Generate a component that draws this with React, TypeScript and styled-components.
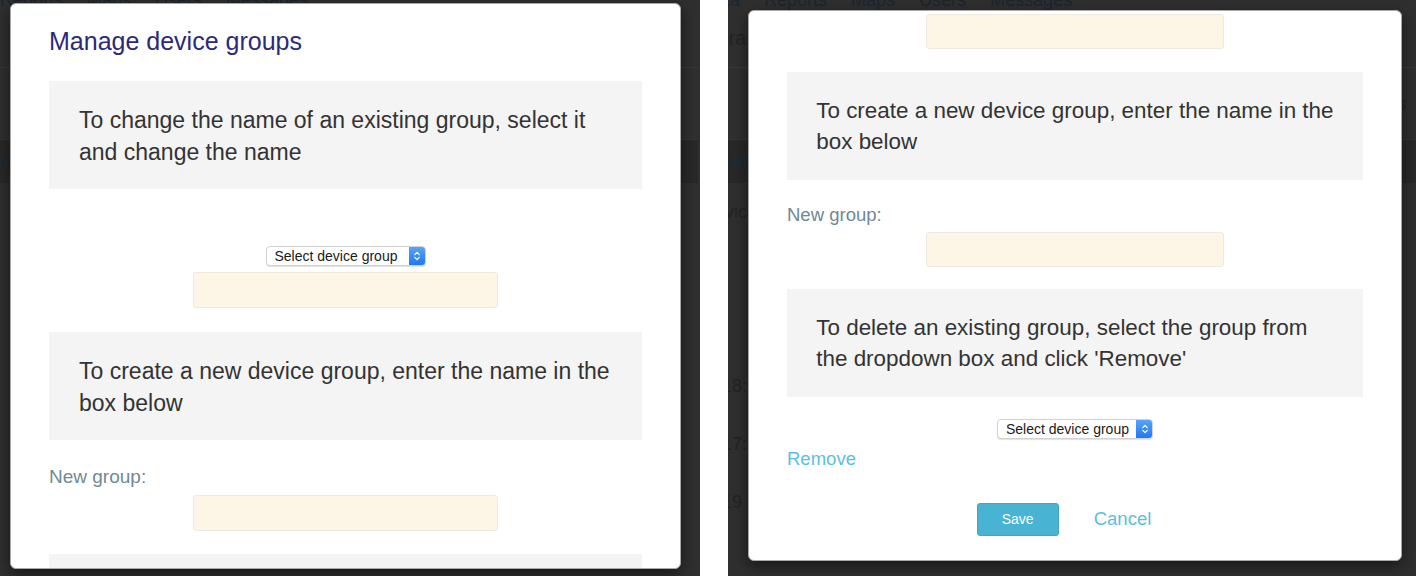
import React from 'react'
import styled, { createGlobalStyle, ThemeProvider } from 'styled-components'

type Scale = { s: number; boxBottom: number }
const px = (n: number) => (p: { theme: Scale }) => `${(p.theme.s * n).toFixed(2)}px`

const GlobalStyle = createGlobalStyle`
  html, body {
    margin: 0;
    padding: 0;
    background: #ffffff;
  }
  body {
    font-family: 'Liberation Sans', Arial, Helvetica, sans-serif;
  }
  * {
    box-sizing: border-box;
  }
`

// page holding the two screenshots side by side
const Canvas = styled.div`
  display: flex;
  width: 1416px;
  height: 576px;
  gap: 28px;
  overflow: hidden;
  background: #ffffff;
`

type ShotProps = { $width: number }
const Shot = styled.div<ShotProps>`
  position: relative;
  width: ${(p) => p.$width}px;
  height: 576px;
  background: #2f2f2f;
  overflow: hidden;
  flex-shrink: 0;
`

// faint page behind the modal backdrop
type BgProps = { $shift: number }
const BgPage = styled.div<BgProps>`
  display: flex;
  flex-direction: column;
  margin-left: ${(p) => p.$shift}px;
  width: 760px;
  font-family: 'Liberation Sans', Arial, sans-serif;
  font-size: 18px;
  color: #1d2630;
`
const BgNav = styled.div`
  display: flex;
  gap: 24px;
  height: 10px;
  line-height: 20px;
  margin-top: -10px;
  color: #1b2530;
`
const BgHeader = styled.div`
  display: flex;
  align-items: center;
  height: 68px;
  border-bottom: 1px solid #3a3a3a;
  color: #232323;
  font-size: 20px;
  padding-top: 10px;
`
const BgTabs = styled.div`
  display: flex;
  align-items: center;
  justify-content: flex-end;
  height: 72px;
  padding-right: 56px;
  border-bottom: 1px solid #363636;
  color: #222222;
  font-size: 19px;
`
const BgBand = styled.div`
  display: flex;
  align-items: center;
  height: 43px;
  background: #282828;
  color: #15303a;
  font-size: 19px;
`
const BgRow = styled.div`
  display: flex;
  align-items: center;
  height: 58px;
  color: #232323;
  font-size: 18px;
`

type ModalProps = { $left: number; $top: number; $w: number; $h: number }
const Modal = styled.div<ModalProps>`
  position: absolute;
  left: ${(p) => p.$left}px;
  top: ${(p) => p.$top}px;
  width: ${(p) => p.$w}px;
  height: ${(p) => p.$h}px;
  display: flex;
  flex-direction: column;
  background: #ffffff;
  border: 1px solid #a9a9a9;
  border-radius: 6px;
  box-shadow: 0 5px 15px rgba(0, 0, 0, 0.5);
  overflow: hidden;
`

type BodyProps = { $padTop: number }
const ModalBody = styled.div<BodyProps>`
  display: flex;
  flex-direction: column;
  padding: ${(p) => p.$padTop}px 38px 0 38px;
`

const Title = styled.h4`
  margin: 0 0 26px 0;
  font-size: 25px;
  line-height: 28px;
  font-weight: normal;
  color: #2c2a78;
`

type GapProps = { $top?: number }
const InfoBox = styled.div<GapProps>`
  margin-top: ${(p) => p.$top ?? 0}px;
  padding: ${px(23)} ${px(30)} ${(p) => p.theme.boxBottom}px ${px(30)};
  background: #f4f4f4;
  color: #333333;
  font-size: ${px(23)};
  line-height: ${px(32)};
  flex-shrink: 0;
`

const FieldLabel = styled.div<GapProps>`
  margin-top: ${(p) => p.$top ?? 0}px;
  font-size: ${px(19)};
  line-height: ${px(27)};
  color: #6e8a94;
`

const TextInput = styled.input<GapProps>`
  display: block;
  align-self: center;
  margin-top: ${(p) => p.$top ?? 0}px;
  width: ${px(305)};
  height: ${px(36)};
  padding: 0 10px;
  background: #fdf6e7;
  border: 1px solid #f0eadc;
  border-radius: 3px;
  outline: none;
  font-family: inherit;
  font-size: 16px;
  flex-shrink: 0;
`

const SelectBox = styled.div<GapProps>`
  align-self: center;
  display: flex;
  align-items: center;
  margin-top: ${(p) => p.$top ?? 0}px;
  width: ${px(160)};
  height: 20px;
  padding-left: 8px;
  background: #ffffff;
  border: 1px solid #d2d2d2;
  border-radius: 4px;
  box-shadow: 0 1px 1px rgba(0, 0, 0, 0.12);
  font-size: 14px;
  color: #1a1a1a;
  flex-shrink: 0;
  overflow: hidden;
`
const SelectText = styled.span`
  flex: 1;
  white-space: nowrap;
`
const Stepper = styled.span`
  display: flex;
  align-items: center;
  justify-content: center;
  flex-shrink: 0;
  width: 17px;
  height: 20px;
  margin-right: -1px;
  border-radius: 0 4px 4px 0;
  background: linear-gradient(#5aa6fb, #1c76ef);
`

const LinkText = styled.a<GapProps>`
  align-self: flex-start;
  margin-top: ${(p) => p.$top ?? 0}px;
  font-size: ${px(19)};
  line-height: ${px(26)};
  color: #5bbfdd;
  text-decoration: none;
  cursor: pointer;
`

const Footer = styled.div<GapProps>`
  display: flex;
  justify-content: center;
  align-items: center;
  gap: 17px;
  margin-top: ${(p) => p.$top ?? 0}px;
  padding-right: 4px;
`
const SaveButton = styled.button`
  width: 82px;
  height: 33px;
  border: 1px solid #3fa6c4;
  border-radius: 3px;
  background: #48b3d2;
  color: #ffffff;
  font-family: inherit;
  font-size: 14px;
  cursor: pointer;
`
const CancelLink = styled.a`
  padding: 0 18px;
  font-size: ${px(19)};
  line-height: 26px;
  color: #5bbfdd;
  cursor: pointer;
`

const DeviceSelect: React.FC<{ top?: number }> = ({ top }) => (
  <SelectBox $top={top}>
    <SelectText>Select device group</SelectText>
    <Stepper>
      <svg width="8" height="12" viewBox="0 0 8 12" fill="none">
        <path d="M1.8 4.6 L4 2.4 L6.2 4.6" stroke="#fff" strokeWidth="1.3" strokeLinecap="round" strokeLinejoin="round" />
        <path d="M1.8 7.4 L4 9.6 L6.2 7.4" stroke="#fff" strokeWidth="1.3" strokeLinecap="round" strokeLinejoin="round" />
      </svg>
    </Stepper>
  </SelectBox>
)

const Background: React.FC<{ shift: number }> = ({ shift }) => (
  <BgPage $shift={shift}>
    <BgNav>
      <span>Data</span>
      <span>Reports</span>
      <span>Maps</span>
      <span>Users</span>
      <span>Messages</span>
    </BgNav>
    <BgHeader>Library</BgHeader>
    <BgTabs>Devices</BgTabs>
    <BgBand>Location</BgBand>
    <BgRow>Device</BgRow>
    <BgRow />
    <BgRow />
    <BgRow>2018:9</BgRow>
    <BgRow>2017:7</BgRow>
    <BgRow>2219</BgRow>
  </BgPage>
)

export default function App() {
  return (
    <>
      <GlobalStyle />
      <Canvas>
        <ThemeProvider theme={{ s: 1, boxBottom: 21 }}>
          <Shot $width={700}>
            <Background shift={-62} />
            <Modal $left={10} $top={3} $w={671} $h={566}>
              <ModalBody $padTop={23}>
                <Title>Manage device groups</Title>
                <InfoBox>
                  To change the name of an existing group, select it and change the name
                </InfoBox>
                <DeviceSelect top={57} />
                <TextInput $top={6} />
                <InfoBox $top={24}>
                  To create a new device group, enter the name in the box below
                </InfoBox>
                <FieldLabel $top={23}>New group:</FieldLabel>
                <TextInput $top={5} />
                <InfoBox $top={23}>
                  To delete an existing group, select the group from the dropdown box and click 'Remove'
                </InfoBox>
              </ModalBody>
            </Modal>
          </Shot>
        </ThemeProvider>
        <ThemeProvider theme={{ s: 0.975, boxBottom: 23 }}>
          <Shot $width={688}>
            <Background shift={-26} />
            <Modal $left={20} $top={10} $w={654} $h={551}>
              <ModalBody $padTop={3}>
                <TextInput />
                <InfoBox $top={23}>
                  To create a new device group, enter the name in the box below
                </InfoBox>
                <FieldLabel $top={22}>New group:</FieldLabel>
                <TextInput $top={4} />
                <InfoBox $top={22}>
                  To delete an existing group, select the group from the dropdown box and click 'Remove'
                </InfoBox>
                <DeviceSelect top={22} />
                <LinkText $top={7}>Remove</LinkText>
                <Footer $top={31}>
                  <SaveButton>Save</SaveButton>
                  <CancelLink>Cancel</CancelLink>
                </Footer>
              </ModalBody>
            </Modal>
          </Shot>
        </ThemeProvider>
      </Canvas>
    </>
  )
}
